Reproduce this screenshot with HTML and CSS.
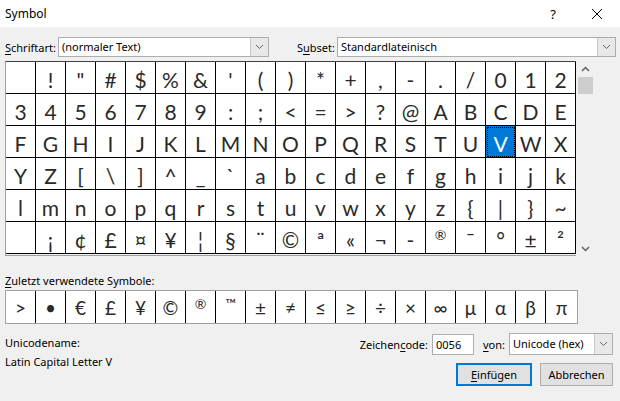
FILE: index.html
```html
<!DOCTYPE html>
<html lang="de">
<head>
<meta charset="utf-8">
<title>Symbol</title>
<link rel="stylesheet" href="styles.css">
</head>
<body>
<div class="dialog">
  <div class="titlebar">
    <span class="title">Symbol</span>
    <span class="help">?</span>
    <span class="close"><svg width="12" height="12" viewBox="0 0 12 12"><path d="M1 1 L11 11 M11 1 L1 11" stroke="#000" stroke-width="1" fill="none"/></svg></span>
  </div>
  <div class="content">
    <div class="fontrow">
      <label class="lbl"><u>S</u>chriftart:</label>
      <div class="combo combo-font"><span class="combo-text">(normaler Text)</span><span class="combo-btn"><svg width="9" height="6" viewBox="0 0 9 6"><path d="M1 1 L4.5 4.5 L8 1" stroke="#666" fill="none"/></svg></span></div>
      <label class="lbl lbl-subset">S<u>u</u>bset:</label>
      <div class="combo combo-subset"><span class="combo-text">Standardlateinisch</span><span class="combo-btn"><svg width="9" height="6" viewBox="0 0 9 6"><path d="M1 1 L4.5 4.5 L8 1" stroke="#666" fill="none"/></svg></span></div>
    </div>

    <div class="gridbox">
      <div class="grid">
        <div class="cell"></div><div class="cell">!</div><div class="cell">"</div><div class="cell">#</div><div class="cell">$</div><div class="cell">%</div><div class="cell">&amp;</div><div class="cell">'</div><div class="cell">(</div><div class="cell">)</div><div class="cell">*</div><div class="cell">+</div><div class="cell">,</div><div class="cell">-</div><div class="cell">.</div><div class="cell">/</div><div class="cell">0</div><div class="cell">1</div><div class="cell">2</div>
        <div class="cell">3</div><div class="cell">4</div><div class="cell">5</div><div class="cell">6</div><div class="cell">7</div><div class="cell">8</div><div class="cell">9</div><div class="cell">:</div><div class="cell">;</div><div class="cell">&lt;</div><div class="cell">=</div><div class="cell">&gt;</div><div class="cell">?</div><div class="cell">@</div><div class="cell">A</div><div class="cell">B</div><div class="cell">C</div><div class="cell">D</div><div class="cell">E</div>
        <div class="cell">F</div><div class="cell">G</div><div class="cell">H</div><div class="cell">I</div><div class="cell">J</div><div class="cell">K</div><div class="cell">L</div><div class="cell">M</div><div class="cell">N</div><div class="cell">O</div><div class="cell">P</div><div class="cell">Q</div><div class="cell">R</div><div class="cell">S</div><div class="cell">T</div><div class="cell">U</div><div class="cell selected">V</div><div class="cell">W</div><div class="cell">X</div>
        <div class="cell">Y</div><div class="cell">Z</div><div class="cell">[</div><div class="cell">\</div><div class="cell">]</div><div class="cell">^</div><div class="cell">_</div><div class="cell">`</div><div class="cell">a</div><div class="cell">b</div><div class="cell">c</div><div class="cell">d</div><div class="cell">e</div><div class="cell">f</div><div class="cell">g</div><div class="cell">h</div><div class="cell">i</div><div class="cell">j</div><div class="cell">k</div>
        <div class="cell">l</div><div class="cell">m</div><div class="cell">n</div><div class="cell">o</div><div class="cell">p</div><div class="cell">q</div><div class="cell">r</div><div class="cell">s</div><div class="cell">t</div><div class="cell">u</div><div class="cell">v</div><div class="cell">w</div><div class="cell">x</div><div class="cell">y</div><div class="cell">z</div><div class="cell">{</div><div class="cell">|</div><div class="cell">}</div><div class="cell">~</div>
        <div class="cell"></div><div class="cell">¡</div><div class="cell">¢</div><div class="cell">£</div><div class="cell">¤</div><div class="cell">¥</div><div class="cell">¦</div><div class="cell">§</div><div class="cell">¨</div><div class="cell">©</div><div class="cell">ª</div><div class="cell">«</div><div class="cell">¬</div><div class="cell">-</div><div class="cell small">®</div><div class="cell">¯</div><div class="cell">°</div><div class="cell">±</div><div class="cell">²</div>
      </div>
      <div class="scrollbar">
        <span class="arrow up"><svg width="9" height="6" viewBox="0 0 9 6"><path d="M1 5 L4.5 1.5 L8 5" stroke="#606060" stroke-width="1.5" fill="none"/></svg></span>
        <span class="thumb"></span>
        <span class="track"></span>
        <span class="arrow down"><svg width="9" height="6" viewBox="0 0 9 6"><path d="M1 1 L4.5 4.5 L8 1" stroke="#606060" stroke-width="1.5" fill="none"/></svg></span>
      </div>
    </div>

    <div class="recent-label"><u>Z</u>uletzt verwendete Symbole:</div>
    <div class="recent">
      <div class="rcell">&gt;</div><div class="rcell">•</div><div class="rcell">€</div><div class="rcell">£</div><div class="rcell">¥</div><div class="rcell">©</div><div class="rcell small">®</div><div class="rcell small">™</div><div class="rcell">±</div><div class="rcell">≠</div><div class="rcell">≤</div><div class="rcell">≥</div><div class="rcell">÷</div><div class="rcell">×</div><div class="rcell">∞</div><div class="rcell">μ</div><div class="rcell">α</div><div class="rcell">β</div><div class="rcell">π</div>
    </div>

    <div class="bottom">
      <div class="uname">
        <div>Unicodename:</div>
        <div>Latin Capital Letter V</div>
      </div>
      <div class="right">
        <div class="coderow">
          <label class="lbl">Zeichen<u>c</u>ode:</label>
          <div class="input">0056</div>
          <label class="lbl lbl-von"><u>v</u>on:</label>
          <div class="combo combo-von"><span class="combo-text">Unicode (hex)</span><span class="combo-btn"><svg width="9" height="6" viewBox="0 0 9 6"><path d="M1 1 L4.5 4.5 L8 1" stroke="#666" fill="none"/></svg></span></div>
        </div>
        <div class="btnrow">
          <button class="btn default"><u>E</u>infügen</button>
          <button class="btn">Abbrechen</button>
        </div>
      </div>
    </div>
  </div>
</div>
</body>
</html>
```

FILE: styles.css
```css
* { box-sizing: border-box; }
html, body { margin: 0; padding: 0; }
body {
  width: 620px;
  height: 401px;
  background: #f0f0f0;
  font-family: "Noto Sans", "Open Sans", sans-serif;
  font-size: 11px;
  color: #000;
  overflow: hidden;
}
u { text-decoration: underline; text-underline-offset: 2px; }

.dialog { width: 620px; height: 401px; display: flex; flex-direction: column; }

.titlebar {
  height: 27px;
  background: #fff;
  display: flex;
  align-items: center;
  padding-left: 5px;
}
.title { flex: 1; font-size: 12px; }
.help { width: 16px; text-align: center; font-size: 13px; margin-right: 28px; }
.close { width: 16px; display: flex; justify-content: center; margin-right: 15px; }

.content { padding: 10px 0 0 5px; flex: 1; display: flex; flex-direction: column; }

.fontrow { display: flex; align-items: center; height: 20px; }
.lbl { white-space: nowrap; }
.combo {
  height: 20px;
  background: #fff;
  border: 1px solid #abadb3;
  display: flex;
  align-items: stretch;
}
.combo-text { flex: 1; padding-left: 3px; line-height: 18px; white-space: nowrap; overflow: hidden; }
.combo-btn {
  width: 18px;
  background: #e8e8e8;
  border-left: 1px solid #c8c8c8;
  display: flex;
  align-items: center;
  justify-content: center;
}
.combo-font { width: 211px; margin-left: 2px; }
.lbl-subset { margin-left: 28px; }
.combo-subset { width: 279px; margin-left: 2px; }

.gridbox {
  margin-top: 4px;
  width: 590px;
  display: flex;
  align-items: flex-start;
}
.grid {
  display: grid;
  grid-template-columns: repeat(19, 30px);
  grid-auto-rows: 32px;
  border-left: 1px solid #a0a0a0;
  border-top: 1px solid #404040;
  border-bottom: 1px solid #a0a0a0;
  padding-bottom: 1px;
  background: #fff;
  background-clip: content-box;
}
.cell {
  border-right: 1px solid #000;
  border-bottom: 1px solid #000;
  display: flex;
  align-items: center;
  justify-content: center;
  font-family: Lato, "Noto Sans", sans-serif;
  font-size: 21px;
  line-height: 1;
  padding-top: 3px;
  color: #2a2a2a;
}
.cell.small, .rcell.small { font-size: 14px; padding-bottom: 8px; }
.cell.selected {
  background: #0078d7;
  color: #fff;
  outline: 1px dotted #000;
  outline-offset: -2px;
}

.scrollbar {
  width: 17px;
  height: 196px;
  margin-left: 1px;
  display: flex;
  flex-direction: column;
  align-items: center;
}
.arrow { height: 16px; display: flex; align-items: center; justify-content: center; }
.thumb { width: 15px; height: 17px; background: #cdcdcd; }
.track { flex: 1; }

.recent-label { margin-top: 17px; height: 16px; line-height: 14px; }
.recent {
  display: flex;
  width: 573px;
  height: 34px;
  border: 1px solid #a0a0a0;
  background: #fff;
}
.rcell {
  width: 30px;
  border-right: 1px solid #000;
  display: flex;
  align-items: center;
  justify-content: center;
  font-family: Lato, "Noto Sans", sans-serif;
  font-size: 19px;
  color: #2a2a2a;
}
.rcell:last-child { border-right: none; flex: 1; }

.bottom {
  margin-top: 9px;
  display: flex;
  justify-content: space-between;
  padding-right: 7px;
}
.uname { display: flex; flex-direction: column; gap: 3px; line-height: 16px; padding-top: 2px; }

.right { display: flex; flex-direction: column; align-items: flex-end; }
.coderow { display: flex; align-items: center; height: 22px; }
.input {
  width: 42px;
  height: 21px;
  margin-left: 4px;
  background: #fff;
  border: 1px solid #abadb3;
  padding-left: 3px;
  line-height: 19px;
}
.lbl-von { margin-left: 9px; }
.combo-von { width: 104px; height: 22px; margin-left: 4px; }
.combo-von .combo-text { line-height: 20px; }

.btnrow { display: flex; gap: 8px; margin-top: 8px; }
.btn {
  height: 23px;
  background: #e1e1e1;
  border: 1px solid #adadad;
  font-family: "Noto Sans", "Open Sans", sans-serif;
  font-size: 11px;
  color: #000;
  padding: 0;
  width: 73px;
}
.btn.default { border: 2px solid #0078d7; width: 76px; }
```
